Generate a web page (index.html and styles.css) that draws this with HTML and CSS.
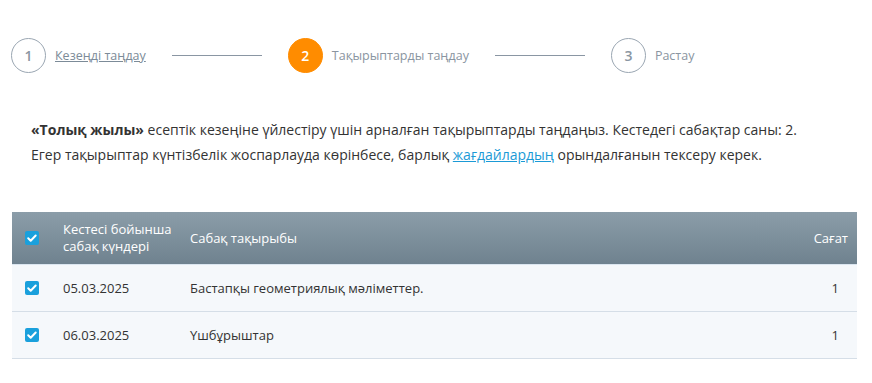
FILE: index.html
```html
<!DOCTYPE html>
<html lang="kk">
<head>
<meta charset="utf-8">
<link rel="stylesheet" href="styles.css">
</head>
<body>
<div class="page">
  <div class="steps">
    <div class="step">
      <span class="circle">1</span>
      <a class="step-label link-step" href="#">Кезеңді таңдау</a>
    </div>
    <span class="line"></span>
    <div class="step">
      <span class="circle active">2</span>
      <span class="step-label">Тақырыптарды таңдау</span>
    </div>
    <span class="line"></span>
    <div class="step">
      <span class="circle">3</span>
      <span class="step-label">Растау</span>
    </div>
  </div>

  <p class="intro"><b>«Толық жылы»</b> есептік кезеңіне үйлестіру үшін арналған тақырыптарды таңдаңыз. Кестедегі сабақтар саны: 2.<br>Егер тақырыптар күнтізбелік жоспарлауда көрінбесе, барлық <a href="#" class="link">жағдайлардың</a> орындалғанын тексеру керек.</p>

  <table class="grid">
    <thead>
      <tr>
        <th class="c-check"><span class="cb"><svg viewBox="0 0 14 14"><path d="M3.2 7.2l2.5 2.5 5-5.2" /></svg></span></th>
        <th class="c-date">Кестесі бойынша сабақ күндері</th>
        <th class="c-topic">Сабақ тақырыбы</th>
        <th class="c-hours">Сағат</th>
      </tr>
    </thead>
    <tbody>
      <tr>
        <td class="c-check"><span class="cb"><svg viewBox="0 0 14 14"><path d="M3.2 7.2l2.5 2.5 5-5.2" /></svg></span></td>
        <td class="c-date">05.03.2025</td>
        <td class="c-topic">Бастапқы геометриялық мәліметтер.</td>
        <td class="c-hours">1</td>
      </tr>
      <tr>
        <td class="c-check"><span class="cb"><svg viewBox="0 0 14 14"><path d="M3.2 7.2l2.5 2.5 5-5.2" /></svg></span></td>
        <td class="c-date">06.03.2025</td>
        <td class="c-topic">Үшбұрыштар</td>
        <td class="c-hours">1</td>
      </tr>
    </tbody>
  </table>
</div>
</body>
</html>
```
FILE: styles.css
```css
html, body {
  margin: 0;
  padding: 0;
  background: #ffffff;
}
body {
  font-family: "Open Sans", "Noto Sans", sans-serif;
  color: #333;
}
.page {
  padding: 37px 15px 0 11px;
}
.steps {
  display: flex;
  align-items: center;
  gap: 26px;
  height: 36px;
}
.step {
  display: flex;
  align-items: center;
  gap: 9px;
}
.circle {
  box-sizing: border-box;
  width: 35px;
  height: 35px;
  border-radius: 50%;
  border: 1px solid #9aa6b2;
  color: #8a96a2;
  display: flex;
  align-items: center;
  justify-content: center;
  font-size: 14px;
  font-weight: 600;
}
.circle.active {
  background: #ff8c00;
  border-color: #ff8c00;
  color: #fff;
}
.step-label {
  font-size: 12.5px;
  color: #8a95a1;
}
.link-step {
  color: #7c8b98;
  text-decoration: underline;
}
.line {
  width: 90px;
  height: 1px;
  background: #8a96a3;
}
.intro {
  margin: 44px 0 0 20px;
  font-size: 14px;
  line-height: 25px;
  color: #333;
}
.intro b {
  font-weight: 700;
}
.link {
  color: #1b9ad6;
  text-decoration: underline;
}
.grid {
  margin-top: 45px;
  margin-left: 1px;
  width: 845px;
  border-collapse: collapse;
  font-size: 13px;
}
.grid th {
  height: 52px;
  padding: 0;
  font-weight: 400;
  color: #fff;
  text-align: left;
  line-height: 17px;
  background: linear-gradient(#8b9da9, #6f828f);
  border-bottom: 1px solid #dbe6f0;
}
.grid td {
  height: 46px;
  padding: 0;
  background: #f5f8fb;
  border-bottom: 1px solid #d5dee7;
  color: #333;
}
.c-check {
  width: 26px;
  padding-left: 13px !important;
}
.c-date {
  width: 115px;
  padding-left: 12px !important;
}
.c-topic {
  padding-left: 12px !important;
}
.grid th.c-hours {
  text-align: right;
  padding-right: 9px !important;
}
.grid td.c-hours {
  text-align: right;
  padding-right: 18px !important;
}
.cb {
  display: block;
  width: 14px;
  height: 14px;
  border-radius: 2px;
  background: #1aa0dc;
}
.cb svg {
  display: block;
  width: 14px;
  height: 14px;
}
.cb path {
  fill: none;
  stroke: #fff;
  stroke-width: 2;
  stroke-linecap: round;
  stroke-linejoin: round;
}
```
